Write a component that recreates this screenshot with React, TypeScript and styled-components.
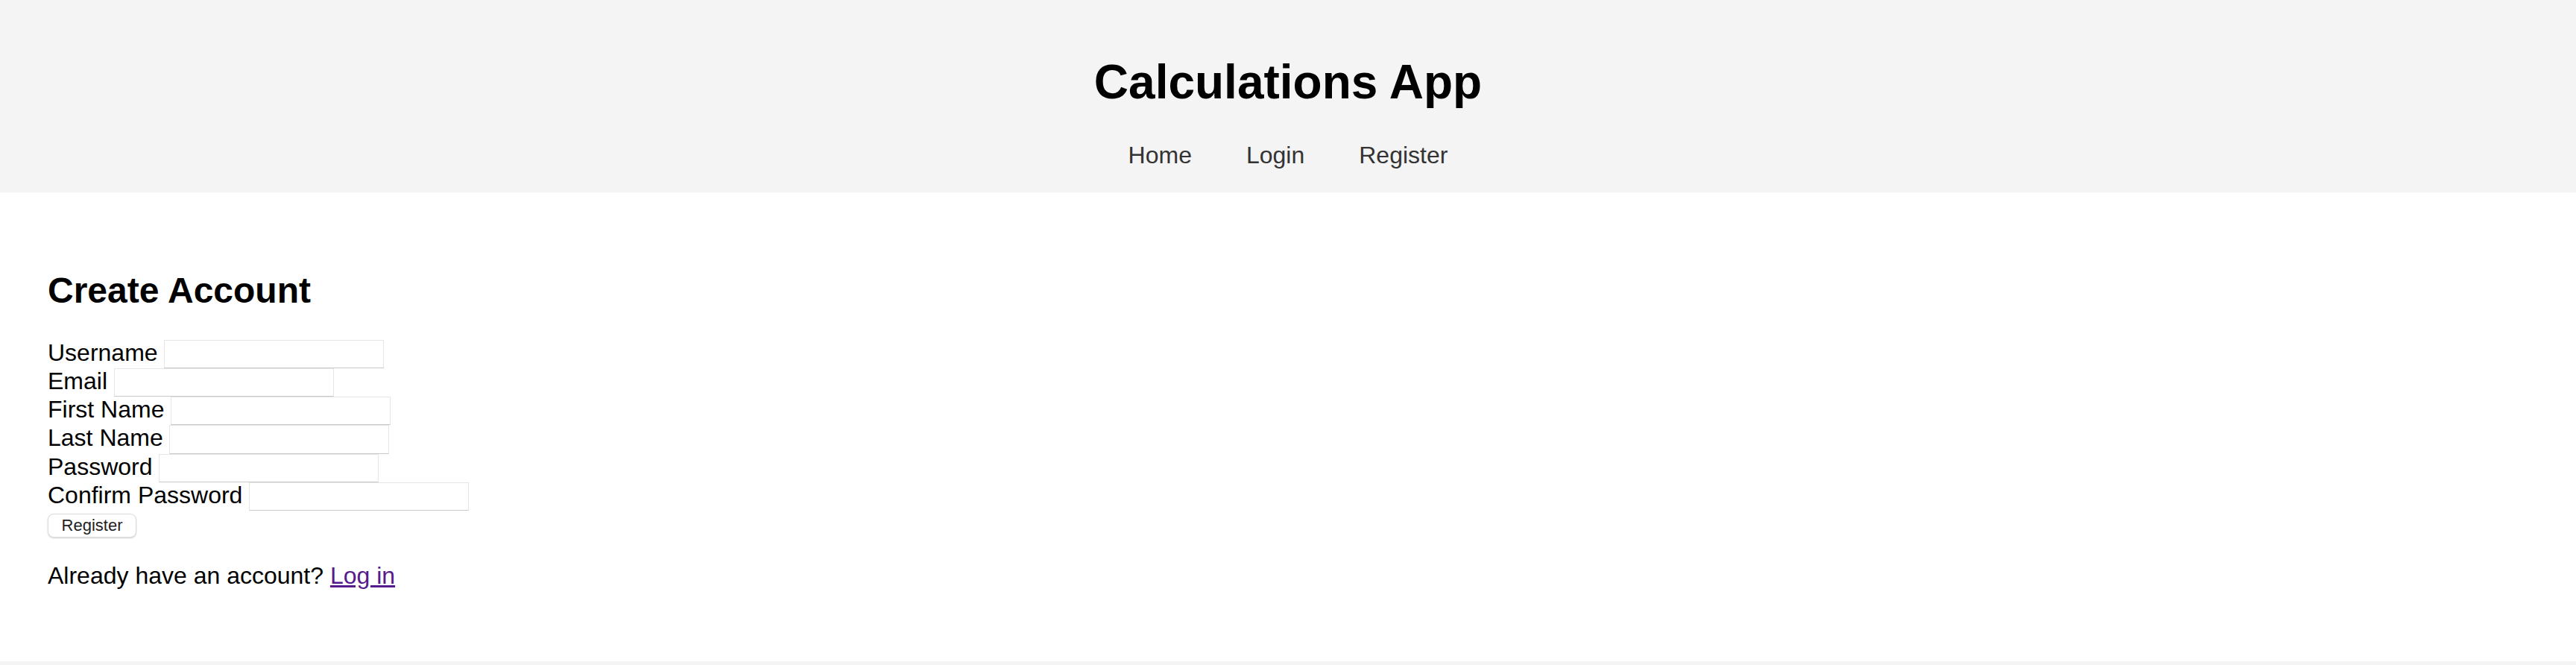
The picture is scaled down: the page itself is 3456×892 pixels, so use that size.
import React from "react";
import styled, { createGlobalStyle } from "styled-components";

const GlobalStyle = createGlobalStyle`
  html, body {
    margin: 0;
    padding: 0;
    background: #ffffff;
    font-family: "Liberation Sans", Arial, Helvetica, sans-serif;
    color: #000;
  }
  * { box-sizing: border-box; }
`;

const Header = styled.header`
  background: #f4f4f4;
  padding: 30px 0 31px;
  text-align: center;
`;

const Title = styled.h1`
  margin: 43px 0;
  font-size: 64px;
  font-weight: 700;
  line-height: normal;
`;

const Nav = styled.nav`
  display: flex;
  justify-content: center;
  gap: 73px;
`;

const NavLink = styled.a`
  font-size: 32px;
  line-height: normal;
  color: #333;
  text-decoration: none;
`;

const Main = styled.main`
  padding: 64px;
`;

const Heading = styled.h2`
  margin: 40px 0 38.5px;
  font-size: 48px;
  font-weight: 700;
  line-height: normal;
`;

const Form = styled.form`
  display: flex;
  flex-direction: column;
  align-items: flex-start;
`;

const Row = styled.div`
  display: flex;
  align-items: flex-start;
  gap: 8.5px;
  height: 38.25px;
`;

const Label = styled.label`
  font-size: 32px;
  line-height: 35px;
  white-space: nowrap;
`;

const Input = styled.input`
  width: 295px;
  height: 38.25px;
  margin: 0;
  padding: 0 4px;
  background: #fff;
  border: 1px solid #e6e6e6;
  border-bottom-color: #c8c8c8;
  border-radius: 0;
  font-size: 26px;
  font-family: inherit;
  outline: none;
`;

const Button = styled.button`
  margin-top: 4px;
  width: 119px;
  height: 32px;
  padding: 0;
  background: #fff;
  color: #222;
  border: 1px solid #dcdcdc;
  border-radius: 8px;
  box-shadow: 0 1px 2px rgba(0, 0, 0, 0.18);
  font-family: inherit;
  font-size: 22px;
  line-height: 1;
  cursor: pointer;
`;

const Note = styled.p`
  margin: 33px 0 32px;
  font-size: 32px;
  line-height: normal;
`;

const LoginLink = styled.a`
  color: #551a8b;
  text-decoration: underline;
`;

const Footer = styled.footer`
  background: #f4f4f4;
  height: 120px;
`;

const fields = [
  { id: "username", label: "Username", type: "text" },
  { id: "email", label: "Email", type: "email" },
  { id: "first_name", label: "First Name", type: "text" },
  { id: "last_name", label: "Last Name", type: "text" },
  { id: "password", label: "Password", type: "password" },
  { id: "confirm_password", label: "Confirm Password", type: "password" },
];

export default function App() {
  return (
    <>
      <GlobalStyle />
      <Header>
        <Title>Calculations App</Title>
        <Nav>
          <NavLink href="#">Home</NavLink>
          <NavLink href="#">Login</NavLink>
          <NavLink href="#">Register</NavLink>
        </Nav>
      </Header>
      <Main>
        <Heading>Create Account</Heading>
        <Form onSubmit={(e) => e.preventDefault()}>
          {fields.map((f) => (
            <Row key={f.id}>
              <Label htmlFor={f.id}>{f.label}</Label>
              <Input id={f.id} name={f.id} type={f.type} />
            </Row>
          ))}
          <Button type="submit">Register</Button>
        </Form>
        <Note>
          Already have an account? <LoginLink href="#">Log in</LoginLink>
        </Note>
      </Main>
      <Footer />
    </>
  );
}
